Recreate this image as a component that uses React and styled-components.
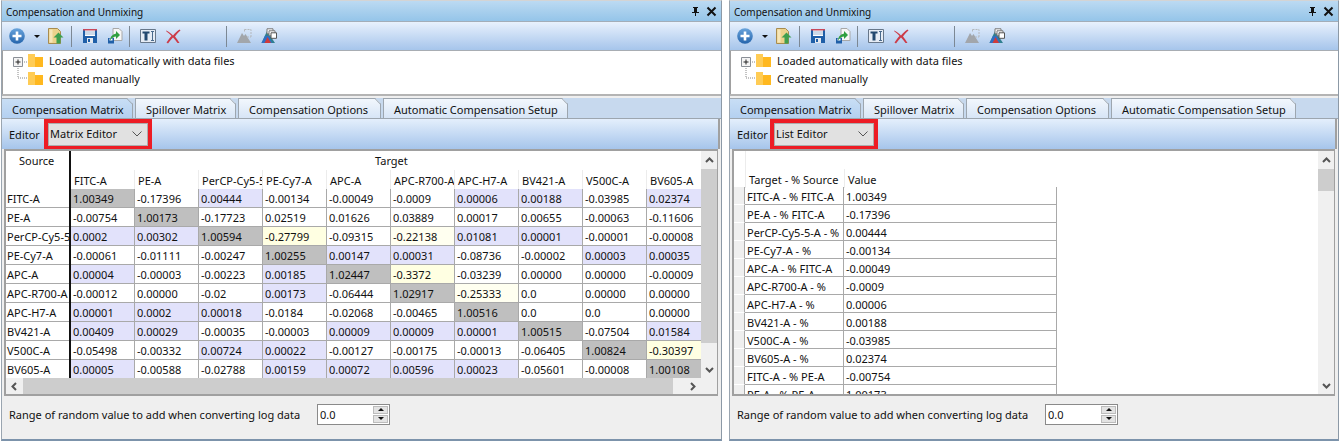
import React from "react";
import styled, { createGlobalStyle } from "styled-components";

const MATRIX_TARGETS = ["FITC-A", "PE-A", "PerCP-Cy5-5-A", "PE-Cy7-A", "APC-A", "APC-R700-A", "APC-H7-A", "BV421-A", "V500C-A", "BV605-A"];

// d = diagonal, b = small positive, y = spillover warning, f = faint warning
const MATRIX_ROWS = [
  ["FITC-A", "1.00349:d", "-0.17396", "0.00444:b", "-0.00134", "-0.00049", "-0.0009", "0.00006:b", "0.00188:b", "-0.03985", "0.02374:b"],
  ["PE-A", "-0.00754", "1.00173:d", "-0.17723", "0.02519", "0.01626", "0.03889", "0.00017", "0.00655", "-0.00063", "-0.11606"],
  ["PerCP-Cy5-5-A", "0.0002:b", "0.00302:b", "1.00594:d", "-0.27799:y", "-0.09315", "-0.22138:f", "0.01081:b", "0.00001:b", "-0.00001", "-0.00008"],
  ["PE-Cy7-A", "-0.00061", "-0.01111", "-0.00247", "1.00255:d", "0.00147:b", "0.00031:b", "-0.08736", "-0.00002", "0.00003:b", "0.00035:b"],
  ["APC-A", "0.00004:b", "-0.00003", "-0.00223", "0.00185:b", "1.02447:d", "-0.3372:y", "-0.03239", "0.00000", "0.00000", "-0.00009"],
  ["APC-R700-A", "-0.00012", "0.00000", "-0.02", "0.00173:b", "-0.06444", "1.02917:d", "-0.25333:f", "0.0", "0.00000", "0.00000"],
  ["APC-H7-A", "0.00001:b", "0.0002:b", "0.00018:b", "-0.0184", "-0.02068", "-0.00465", "1.00516:d", "0.0", "0.0", "0.00000"],
  ["BV421-A", "0.00409:b", "0.00029:b", "-0.00035", "-0.00003", "0.00009:b", "0.00009:b", "0.00001:b", "1.00515:d", "-0.07504", "0.01584:b"],
  ["V500C-A", "-0.05498", "-0.00332", "0.00724:b", "0.00022:b", "-0.00127", "-0.00175", "-0.00013", "-0.06405", "1.00824:d", "-0.30397:y"],
  ["BV605-A", "0.00005:b", "-0.00588", "-0.02788", "0.00159:b", "0.00072:b", "0.00596:b", "0.00023:b", "-0.05601", "-0.00008", "1.00108:d"],
];

const LIST_ROWS = [
  ["FITC-A - % FITC-A", "1.00349"],
  ["PE-A - % FITC-A", "-0.17396"],
  ["PerCP-Cy5-5-A - %", "0.00444"],
  ["PE-Cy7-A - %", "-0.00134"],
  ["APC-A - % FITC-A", "-0.00049"],
  ["APC-R700-A - %", "-0.0009"],
  ["APC-H7-A - %", "0.00006"],
  ["BV421-A - %", "0.00188"],
  ["V500C-A - %", "-0.03985"],
  ["BV605-A - %", "0.02374"],
  ["FITC-A - % PE-A", "-0.00754"],
  ["PE-A - % PE-A", "1.00173"],
];

const TABS = [
  { label: "Compensation Matrix", width: 131, active: true },
  { label: "Spillover Matrix", width: 101 },
  { label: "Compensation Options", width: 143 },
  { label: "Automatic Compensation Setup", width: 185 },
];

const CELL_COLORS = { d: "#bfbfbf", b: "#e2e2fb", y: "#ffffe2", f: "#fffff0" };

const GlobalStyle = createGlobalStyle`
  html, body {
    margin: 0;
    padding: 0;
    background: #ffffff;
  }
  body {
    font-family: "Noto Sans", "Open Sans", sans-serif;
    font-size: 11px;
    color: #111111;
    overflow: hidden;
  }
`;

const Page = styled.div`
  display: flex;
  gap: 7px;
  width: 1339px;
  height: 441px;
  padding-left: 1px;
  box-sizing: border-box;
`;

const Panel = styled.section`
  display: flex;
  flex-direction: column;
  width: ${(p) => p.$width}px;
  height: 441px;
  box-sizing: border-box;
  border-top: 1px solid #d4d4d4;
  border-left: 1px solid #9aa5b0;
  border-right: 1px solid #8c99a6;
  border-bottom: 2px solid #7c93ab;
  background: #efefef;
  flex: none;
`;

const TitleBar = styled.header`
  display: flex;
  align-items: center;
  height: 20px;
  padding: 0 4px 0 4px;
  font-size: 10px;
  background: linear-gradient(to bottom, #bcdaf2, #95c5e9);
  border-bottom: 1px solid #a3adb8;
  flex: none;
`;

const TitleText = styled.span`
  flex: 1;
  padding-top: 2px;
`;

const TitleButton = styled.svg`
  width: 11px;
  height: 11px;
  margin-left: 5px;
`;

const Toolbar = styled.div`
  display: flex;
  align-items: center;
  height: 28px;
  padding-left: 7px;
  background: linear-gradient(to bottom, #e8f1fd, #a6c5eb);
  border-bottom: 1px solid #a8adb3;
  flex: none;
`;

const ToolIcon = styled.svg`
  width: 16px;
  height: 16px;
  margin-left: ${(p) => p.$left || 0}px;
  flex: none;
`;

const ToolCaret = styled.span`
  width: 0;
  height: 0;
  margin-left: 9px;
  border-left: 3px solid transparent;
  border-right: 3px solid transparent;
  border-top: 3px solid #111111;
`;

const ToolSeparator = styled.span`
  width: 1px;
  height: 21px;
  margin-left: ${(p) => p.$left}px;
  background: #7c8894;
  flex: none;
`;

const Tree = styled.div`
  position: relative;
  height: 43px;
  padding: 0 0 0 46px;
  box-sizing: border-box;
  background: #ffffff;
  border-left: 1px solid #a0a0a0;
  flex: none;
`;

const TreeRow = styled.div`
  display: flex;
  align-items: center;
  height: 18px;
  position: relative;
`;

const TreeFolder = styled.svg`
  position: absolute;
  left: -21px;
  top: 3px;
  width: 15px;
  height: 13px;
`;

const TreeLines = styled.svg`
  position: absolute;
  left: 7px;
  top: 3px;
  width: 20px;
  height: 32px;
`;

const Splitter = styled.div`
  height: 4px;
  background: #efefef;
  border-top: 2px solid #b4b4b4;
  box-sizing: border-box;
  flex: none;
`;

const TabStrip = styled.div`
  display: flex;
  gap: 2px;
  height: 21px;
  background: #c7d9ee;
  border-bottom: 1px solid #9da6af;
  box-sizing: border-box;
  flex: none;
`;

const Tab = styled.div`
  position: relative;
  width: ${(p) => p.$width}px;
  height: 20px;
  box-sizing: border-box;
  padding: 0 0 0 10px;
  line-height: 22px;
  white-space: nowrap;
  border-top: 1px solid #9da6af;
  border-right: 1px solid #9da6af;
  border-left: ${(p) => (p.$active ? "0" : "1px solid #9da6af")};
  background: ${(p) =>
    p.$active ? "linear-gradient(to bottom, #c8def5, #b4d0f0)" : "linear-gradient(to bottom, #f2f7fd, #d7e5f6)"};
  clip-path: polygon(0 0, calc(100% - 6px) 0, 100% 6px, 100% 100%, 0 100%);

  &::after {
    content: "";
    position: absolute;
    right: -2px;
    top: 2px;
    width: 8px;
    height: 1px;
    background: #9da6af;
    transform: rotate(45deg);
  }
`;

const EditorBar = styled.div`
  display: flex;
  align-items: center;
  height: 30px;
  margin-right: 1px;
  padding-left: 7px;
  background: linear-gradient(to bottom, #e4effc, #a6c5eb);
  border-right: 2px solid #a0a0a0;
  flex: none;
`;

const EditorLabel = styled.span`
  width: ${(p) => p.$width}px;
  flex: none;
`;

const HighlightBox = styled.div`
  display: flex;
  width: 108px;
  height: 31px;
  margin-top: 1px;
  box-sizing: border-box;
  border: 4px solid #ed1c24;
  background: #ed1c24;
`;

const Combo = styled.div`
  display: flex;
  align-items: center;
  justify-content: space-between;
  width: 100%;
  padding: 0 5px 2px 1px;
  box-sizing: border-box;
  background: #e1e1e1;
  border: 1px solid #adadad;
`;

const ComboChevron = styled.svg`
  width: 10px;
  height: 6px;
`;

const GridFrame = styled.div`
  display: flex;
  flex-direction: column;
  height: 247px;
  margin: 0 3px 0 2px;
  background: #ffffff;
  border: 2px solid #a0a0a0;
  border-right-width: 1px;
  box-sizing: border-box;
  overflow: hidden;
  flex: none;
`;

const GridBody = styled.div`
  display: flex;
  flex: 1;
  min-height: 0;
`;

const GridViewport = styled.div`
  flex: 1;
  min-width: 0;
  overflow: hidden;
`;

const MatrixGrid = styled.div`
  display: grid;
  grid-template-columns: 63px 2px repeat(10, 64px);
  grid-auto-rows: 19px;
  width: 705px;
  line-height: 19px;
`;

const SourceHead = styled.div`
  grid-column: 1;
  grid-row: 1 / span 2;
  padding: 0 0 0 13px;
`;

const BlackRule = styled.div`
  grid-column: 2;
  grid-row: 1 / span 12;
  background: #111111;
`;

const TargetHead = styled.div`
  grid-column: 3 / span 10;
  height: 19px;
  padding: 0 0 0 304px;
`;

const ColumnHead = styled.div`
  padding: 1px 0 0 3px;
  white-space: nowrap;
  overflow: hidden;
  border-right: 1px solid #ececec;
`;

const RowHead = styled.div`
  grid-column: 1;
  padding: 0 0 0 1px;
  white-space: nowrap;
  overflow: hidden;
  border-bottom: 1px solid #a9a9a9;
  box-sizing: border-box;
`;

const Cell = styled.div`
  padding: 0 0 0 2px;
  white-space: nowrap;
  background: ${(p) => CELL_COLORS[p.$tone] || "#ffffff"};
  border-right: 1px solid #a9a9a9;
  border-bottom: 1px solid #a9a9a9;
  box-sizing: border-box;
`;

const ListGrid = styled.div`
  display: grid;
  grid-template-columns: 11px 99px 213px;
  grid-auto-rows: 18px;
`;

const ListSpacer = styled.div`
  grid-column: 1 / span 3;
  height: 19px;
  margin-left: 11px;
  border-left: 1px solid #ececec;
  width: 0;
`;

const ListHeadGap = styled.div`
  height: 19px;
`;

const ListHead = styled.div`
  height: 19px;
  padding: 1px 0 0 3px;
  line-height: 19px;
  border-left: 1px solid #ececec;
  white-space: nowrap;
  box-sizing: border-box;
`;

const ListRowHead = styled.div`
  background: #efefef;
  border-bottom: 1px solid #ffffff;
  border-right: 1px solid #a9a9a9;
  box-sizing: border-box;
`;

const ListCell = styled.div`
  padding-left: 2px;
  line-height: 19px;
  white-space: nowrap;
  overflow: hidden;
  border-right: 1px solid #a9a9a9;
  border-bottom: 1px solid #a9a9a9;
  box-sizing: border-box;
`;

const VScroll = styled.div`
  display: flex;
  flex-direction: column;
  width: 16px;
  background: #f0f0f0;
  flex: none;
`;

const ScrollArrow = styled.div`
  display: flex;
  align-items: center;
  justify-content: center;
  width: ${(p) => (p.$horizontal ? "17px" : "16px")};
  height: ${(p) => (p.$horizontal ? "16px" : "18px")};
  flex: none;
`;

const VThumb = styled.div`
  height: ${(p) => p.$height}px;
  background: #cdcdcd;
  flex: none;
`;

const ScrollFill = styled.div`
  flex: 1;
`;

const HScroll = styled.div`
  display: flex;
  height: 16px;
  padding-right: 16px;
  box-sizing: border-box;
  background: #f0f0f0;
  flex: none;
`;

const HThumb = styled.div`
  width: 650px;
  background: #cdcdcd;
`;

const ArrowGlyph = styled.svg`
  width: 9px;
  height: 9px;
`;

const Footer = styled.div`
  display: flex;
  align-items: center;
  height: 28px;
  padding: 0 0 0 7px;
  margin-top: 4px;
  flex: none;
`;

const FooterLabel = styled.span`
  width: 308px;
  white-space: nowrap;
  flex: none;
`;

const Spinner = styled.div`
  display: flex;
  align-items: center;
  justify-content: space-between;
  width: 73px;
  height: 21px;
  padding: 0 1px 0 2px;
  box-sizing: border-box;
  background: #ffffff;
  border: 1px solid #8a8a8a;
`;

const SpinButtons = styled.div`
  display: flex;
  flex-direction: column;
  gap: 1px;
  width: 15px;
`;

const SpinButton = styled.div`
  display: flex;
  align-items: center;
  justify-content: center;
  height: 8px;
  background: #e3e3e3;
  border: 1px solid #bcbcbc;
  box-sizing: border-box;
`;

const SpinArrow = styled.span`
  width: 0;
  height: 0;
  border-left: 3px solid transparent;
  border-right: 3px solid transparent;
  ${(p) => (p.$up ? "border-bottom: 3px solid #111;" : "border-top: 3px solid #111;")}
`;

function PinIcon() {
  return (
    <TitleButton viewBox="0 0 11 11">
      <path d="M3 1h5v1H7v4h2v1H6v3H5V7H2V6h2V2H3z" fill="#111" />
    </TitleButton>
  );
}

function CloseIcon() {
  return (
    <TitleButton viewBox="0 0 11 11">
      <path d="M1.500 1.500l8 8M9.500 1.500l-8 8" stroke="#111" strokeWidth="2" />
    </TitleButton>
  );
}

function AddIcon() {
  return (
    <ToolIcon viewBox="0 0 16 16">
      <defs>
        <linearGradient id="addFill" x1="0" y1="0" x2="0" y2="1">
          <stop offset="0" stopColor="#6aa4dc" />
          <stop offset="1" stopColor="#2464ac" />
        </linearGradient>
      </defs>
      <circle cx="8" cy="8" r="7.800" fill="url(#addFill)" />
      <path d="M8 3.500v9M3.500 8h9" stroke="#fff" strokeWidth="2.600" />
    </ToolIcon>
  );
}

function OpenFileIcon({ left }) {
  return (
    <ToolIcon $left={left} viewBox="0 0 16 16">
      <path d="M.5.500h9l3 3v12H.5z" fill="#ecd28c" stroke="#a88c50" />
      <path d="M1.500 1.500h3v13h-3z" fill="#f6e6b8" />
      <path d="M10.500 4.500L15.500 9.500h-3v6h-4v-6h-3z" fill="#3f9f4f" />
    </ToolIcon>
  );
}

function SaveIcon({ left }) {
  return (
    <ToolIcon $left={left} viewBox="0 0 16 16">
      <path d="M1 1h14v14H1z" fill="#1f5fa8" />
      <path d="M3 2h10v6H3z" fill="#fff" />
      <path d="M1 1h14v1.500H1z" fill="#c8485a" />
      <path d="M3 4h10M3 6h10" stroke="#9bb4d2" />
      <path d="M5 10h6v5H5z" fill="#e4e8ee" />
      <path d="M6 11h2v3H6z" fill="#1f5fa8" />
    </ToolIcon>
  );
}

function ExportIcon({ left }) {
  return (
    <ToolIcon $left={left} viewBox="0 0 16 16">
      <path d="M6 .500h6l3 3v9H6z" fill="#f6f6f6" stroke="#a8a8a8" />
      <path d="M1 10h6v5.500H1z" fill="#1f5fa8" />
      <path d="M2.500 10.500h3v2h-3z" fill="#fff" />
      <path d="M3 11.500c1-4 3-5 6-6V3l4 4-4 4V8.500c-2 0-4 1-6 4z" fill="#2f9f3f" />
    </ToolIcon>
  );
}

function TextIcon({ left }) {
  return (
    <ToolIcon $left={left} viewBox="0 0 16 16">
      <path d="M.5 1.500h15v13H.5z" fill="#e6ecf5" stroke="#67778a" />
      <path d="M2.500 3.500h7v2h-2v7h-3v-7h-2z" fill="#23486f" />
      <path d="M11 3.500h3M12.500 3.500v9M11 12.500h3" stroke="#4a6a8c" fill="none" />
    </ToolIcon>
  );
}

function DeleteIcon({ left }) {
  return (
    <ToolIcon $left={left} viewBox="0 0 16 16">
      <path d="M1 2.500c3 1 5 3 7 5 2-2.500 4-4.500 6.500-6l1 1c-2.500 2-4 4-5.500 6 1.500 2 3 4 4.500 6.500l-2 0c-1.500-2-3-4-4.500-5.500-2 2-3.500 4-5 6l-1.500-1c1.500-2 3-4.500 5-6.500-2-2-3.500-3.500-5.500-5z" fill="#cc3b48" />
    </ToolIcon>
  );
}

function MountainFrameIcon({ left }) {
  return (
    <ToolIcon $left={left} viewBox="0 0 16 16">
      <path d="M1 15L6 5l2 3 1.500-2L15 15z" fill="#a2a6ab" />
      <path d="M8.500 1.500h6.500v7.500" fill="none" stroke="#b4b8bd" strokeDasharray="2 1" />
      <path d="M8.500 1.500v3M11 9h4" stroke="#b4b8bd" strokeDasharray="2 1" />
    </ToolIcon>
  );
}

function MountainCopyIcon({ left }) {
  return (
    <ToolIcon $left={left} viewBox="0 0 16 16">
      <path d="M.5 15L6 3l2 3 6 9z" fill="#2f7f8f" />
      <path d="M.5 15L4 8h4l3 7z" fill="#2f6fc4" />
      <path d="M3.500 15L6.500 9l3.500 6z" fill="#d03a3a" />
      <path d="M6 .800h6v5H6z" fill="#fff" stroke="#777" />
      <path d="M8 2.800h6v5H8z" fill="#fff" stroke="#777" />
      <path d="M10 4.800h5.500v5.500H10z" fill="#fff" stroke="#555" />
    </ToolIcon>
  );
}

function FolderGlyph() {
  return (
    <TreeFolder viewBox="0 0 15 13">
      <path d="M0 0h7v3h8v10H0z" fill="#ffcc55" />
      <path d="M7 3h8v10H7z" fill="#ffb81f" />
    </TreeFolder>
  );
}

function ChevronGlyph({ dir }) {
  const paths = {
    up: "M1 6l3.500-3.500L8 6",
    down: "M1 3l3.500 3.500L8 3",
    left: "M6 1L2.500 4.500 6 8",
    right: "M3 1l3.500 3.500L3 8",
  };
  return (
    <ArrowGlyph viewBox="0 0 9 9">
      <path d={paths[dir]} fill="none" stroke="#555" strokeWidth="2" />
    </ArrowGlyph>
  );
}

function MatrixEditor() {
  return (
    <GridFrame>
      <GridBody>
        <GridViewport>
          <MatrixGrid>
            <SourceHead>Source</SourceHead>
            <BlackRule />
            <TargetHead>Target</TargetHead>
            {MATRIX_TARGETS.map((name) => (
              <ColumnHead key={name}>{name}</ColumnHead>
            ))}
            {MATRIX_ROWS.map(([name, ...values]) => (
              <React.Fragment key={name}>
                <RowHead>{name}</RowHead>
                {values.map((entry, i) => {
                  const [value, tone] = entry.split(":");
                  return (
                    <Cell key={i} $tone={tone} style={{ gridColumn: i + 3 }}>
                      {value}
                    </Cell>
                  );
                })}
              </React.Fragment>
            ))}
          </MatrixGrid>
        </GridViewport>
        <VScroll>
          <ScrollArrow>
            <ChevronGlyph dir="up" />
          </ScrollArrow>
          <VThumb $height={174} />
          <ScrollFill />
          <ScrollArrow>
            <ChevronGlyph dir="down" />
          </ScrollArrow>
        </VScroll>
      </GridBody>
      <HScroll>
        <ScrollArrow $horizontal>
          <ChevronGlyph dir="left" />
        </ScrollArrow>
        <HThumb />
        <ScrollFill />
        <ScrollArrow $horizontal>
          <ChevronGlyph dir="right" />
        </ScrollArrow>
      </HScroll>
    </GridFrame>
  );
}

function ListEditor() {
  return (
    <GridFrame>
      <GridBody>
        <GridViewport>
          <ListGrid>
            <ListSpacer />
            <ListHeadGap />
            <ListHead>Target - % Source</ListHead>
            <ListHead>Value</ListHead>
            {LIST_ROWS.map(([name, value]) => (
              <React.Fragment key={name}>
                <ListRowHead />
                <ListCell>{name}</ListCell>
                <ListCell>{value}</ListCell>
              </React.Fragment>
            ))}
          </ListGrid>
        </GridViewport>
        <VScroll>
          <ScrollArrow>
            <ChevronGlyph dir="up" />
          </ScrollArrow>
          <VThumb $height={22} />
          <ScrollFill />
          <ScrollArrow>
            <ChevronGlyph dir="down" />
          </ScrollArrow>
        </VScroll>
      </GridBody>
    </GridFrame>
  );
}

function CompensationPanel({ width, labelWidth, editorName, children }) {
  return (
    <Panel $width={width}>
      <TitleBar>
        <TitleText>Compensation and Unmixing</TitleText>
        <PinIcon />
        <CloseIcon />
      </TitleBar>
      <Toolbar>
        <AddIcon />
        <ToolCaret />
        <OpenFileIcon left={8} />
        <ToolSeparator $left={7} />
        <SaveIcon left={10} />
        <ExportIcon left={9} />
        <ToolSeparator $left={6} />
        <TextIcon left={10} />
        <DeleteIcon left={9} />
        <ToolSeparator $left={45} />
        <MountainFrameIcon left={9} />
        <MountainCopyIcon left={9} />
      </Toolbar>
      <Tree>
        <TreeLines viewBox="0 0 20 32">
          <path d="M12 8h6M8 12v12h10" fill="none" stroke="#888" strokeDasharray="1 1" />
          <path d="M3.500 3.500h9v9h-9z" fill="#f4f4f4" stroke="#8a8f96" />
          <path d="M5.500 8h5M8 5.500v5" stroke="#222" />
        </TreeLines>
        <TreeRow>
          <FolderGlyph />
          Loaded automatically with data files
        </TreeRow>
        <TreeRow>
          <FolderGlyph />
          Created manually
        </TreeRow>
      </Tree>
      <Splitter />
      <TabStrip>
        {TABS.map((tab) => (
          <Tab key={tab.label} $width={tab.width} $active={tab.active}>
            {tab.label}
          </Tab>
        ))}
      </TabStrip>
      <EditorBar>
        <EditorLabel $width={labelWidth}>Editor</EditorLabel>
        <HighlightBox>
          <Combo>
            {editorName}
            <ComboChevron viewBox="0 0 10 6">
              <path d="M.5.500L5 5 9.500.500" fill="none" stroke="#555" />
            </ComboChevron>
          </Combo>
        </HighlightBox>
      </EditorBar>
      {children}
      <Footer>
        <FooterLabel>Range of random value to add when converting log data</FooterLabel>
        <Spinner>
          0.0
          <SpinButtons>
            <SpinButton>
              <SpinArrow $up />
            </SpinButton>
            <SpinButton>
              <SpinArrow />
            </SpinButton>
          </SpinButtons>
        </Spinner>
      </Footer>
    </Panel>
  );
}

export default function App() {
  return (
    <>
      <GlobalStyle />
      <Page>
        <CompensationPanel width={721} labelWidth={35} editorName="Matrix Editor">
          <MatrixEditor />
        </CompensationPanel>
        <CompensationPanel width={610} labelWidth={33} editorName="List Editor">
          <ListEditor />
        </CompensationPanel>
      </Page>
    </>
  );
}
